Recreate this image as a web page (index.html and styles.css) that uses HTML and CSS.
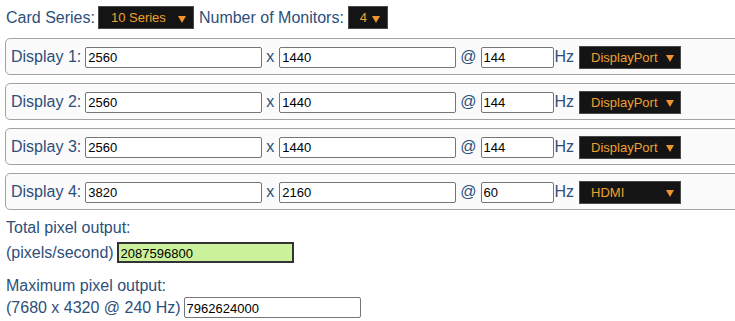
FILE: index.html
```html
<!DOCTYPE html>
<html>
<head>
<meta charset="utf-8">
<link rel="stylesheet" href="styles.css">
</head>
<body>
<div class="page">
  <div class="toprow">
    <span class="lbl lbl-card">Card Series:</span>
    <span class="sel sel-series"><span class="sel-text">10 Series</span><span class="arrow"></span></span>
    <span class="lbl lbl-num">Number of Monitors:</span>
    <span class="sel sel-num"><span class="sel-text">4</span><span class="arrow"></span></span>
  </div>

  <div class="box">
    <span class="lbl dlabel">Display 1:</span>
    <input class="inp wide" value="2560">
    <span class="lbl sep-x">x</span>
    <input class="inp wide" value="1440">
    <span class="lbl sep-at">@</span>
    <input class="inp hz" value="144">
    <span class="lbl sep-hz">Hz</span>
    <span class="sel sel-port"><span class="sel-text">DisplayPort</span><span class="arrow"></span></span>
  </div>
  <div class="box">
    <span class="lbl dlabel">Display 2:</span>
    <input class="inp wide" value="2560">
    <span class="lbl sep-x">x</span>
    <input class="inp wide" value="1440">
    <span class="lbl sep-at">@</span>
    <input class="inp hz" value="144">
    <span class="lbl sep-hz">Hz</span>
    <span class="sel sel-port"><span class="sel-text">DisplayPort</span><span class="arrow"></span></span>
  </div>
  <div class="box">
    <span class="lbl dlabel">Display 3:</span>
    <input class="inp wide" value="2560">
    <span class="lbl sep-x">x</span>
    <input class="inp wide" value="1440">
    <span class="lbl sep-at">@</span>
    <input class="inp hz" value="144">
    <span class="lbl sep-hz">Hz</span>
    <span class="sel sel-port"><span class="sel-text">DisplayPort</span><span class="arrow"></span></span>
  </div>
  <div class="box">
    <span class="lbl dlabel">Display 4:</span>
    <input class="inp wide" value="3820">
    <span class="lbl sep-x">x</span>
    <input class="inp wide" value="2160">
    <span class="lbl sep-at">@</span>
    <input class="inp hz" value="60">
    <span class="lbl sep-hz">Hz</span>
    <span class="sel sel-port sel-hdmi"><span class="sel-text">HDMI</span><span class="arrow"></span></span>
  </div>

  <div class="out">
    <div class="out-title lbl">Total pixel output:</div>
    <div class="out-row row-total">
      <span class="lbl">(pixels/second)</span>
      <input class="inp wide total" value="2087596800">
    </div>
    <div class="out-title lbl">Maximum pixel output:</div>
    <div class="out-row row-max">
      <span class="lbl">(7680 x 4320 @ 240 Hz)</span>
      <input class="inp wide" value="7962624000">
    </div>
  </div>
</div>
</body>
</html>
```
FILE: styles.css
```css
html, body {
  margin: 0;
  padding: 0;
  background: #ffffff;
  overflow: hidden;
}
body {
  font-family: "Liberation Sans", Arial, sans-serif;
  font-size: 16px;
  color: #2d4f7a;
}
.page {
  padding: 6px 0 0 5px;
  width: 760px;
}
.lbl {
  color: #2d4f7a;
  font-size: 16px;
  line-height: 18px;
  white-space: nowrap;
  flex-shrink: 0;
}
.toprow {
  display: flex;
  align-items: center;
  height: 23px;
  padding-left: 1px;
}
.lbl-card {
  margin-right: 3px;
}
.lbl-num {
  margin-right: 4px;
}
.sel {
  display: inline-flex;
  align-items: center;
  flex-shrink: 0;
  box-sizing: border-box;
  height: 23px;
  background: #141414;
  border: 1px solid #4a4a4a;
  color: #f0a030;
  font-family: "Liberation Sans", Arial, sans-serif;
  font-size: 13px;
  padding: 0 7px 0 11px;
}
.sel-text {
  flex: 1;
  white-space: nowrap;
}
.arrow {
  width: 0;
  height: 0;
  border-left: 4px solid transparent;
  border-right: 4px solid transparent;
  border-top: 7px solid #ee9430;
  margin-top: 3px;
}
.sel-series {
  width: 96px;
  margin-right: 5px;
  padding-left: 12px;
}
.sel-num {
  width: 40px;
  padding-left: 11px;
}
.box {
  display: flex;
  align-items: center;
  box-sizing: border-box;
  height: 37px;
  margin-top: 9px;
  border: 1px solid #a3a3a3;
  border-radius: 5px;
  background: #fbfbfb;
  padding: 1px 0 0 5px;
}
.box + .box {
  margin-top: 8px;
}
.inp {
  box-sizing: border-box;
  flex-shrink: 0;
  height: 21px;
  border: 1px solid #767676;
  border-radius: 2px;
  background: #ffffff;
  font-family: "Liberation Sans", Arial, sans-serif;
  font-size: 13px;
  color: #000000;
  padding: 1px 2px 0 2px;
  margin: 0;
  outline: none;
}
.wide {
  width: 177px;
}
.hz {
  width: 73px;
}
.dlabel {
  margin-right: 4px;
  min-width: 70px;
}
.sep-x {
  margin: 0 5px 0 4px;
}
.sep-at {
  margin: 0 4px 0 4px;
}
.sep-hz {
  margin: 0 5px 0 1px;
}
.sel-port {
  width: 102px;
  height: 23px;
  padding-left: 11px;
  padding-right: 6px;
}
.out {
  padding-top: 9px;
}
.out-title {
  height: 18px;
  padding-left: 1px;
}
.out-row {
  display: flex;
  align-items: center;
  padding-left: 1px;
}
.row-total {
  margin-top: 5px;
  margin-bottom: 14px;
}
.row-max {
  margin-top: 2px;
}
.out-row .lbl {
  margin-right: 3px;
}
.total {
  background: #ccf19b;
  border: 2px solid #333333;
  border-radius: 0;
  height: 21px;
}
```
